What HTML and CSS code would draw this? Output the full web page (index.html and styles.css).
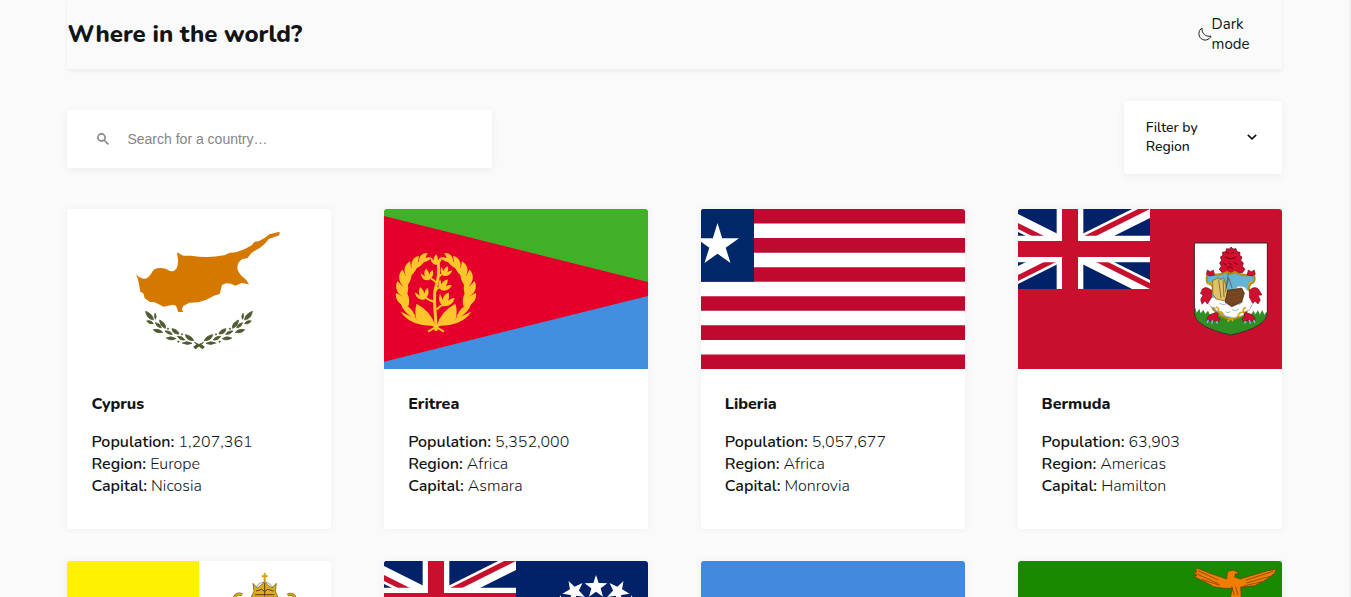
FILE: index.html
```html
<!DOCTYPE html>
<html lang="en">
<head>
<meta charset="utf-8">
<meta name="viewport" content="width=device-width, initial-scale=1">
<title>Where in the world?</title>
<link rel="stylesheet" href="styles.css">
</head>
<body>
<svg class="defs" aria-hidden="true">
  <defs>
    <clipPath id="uj-frame"><path d="M0 0h60v30H0z"/></clipPath>
    <clipPath id="uj-quarters"><path d="M30 15h30v15zv15H0zH0V0zV0h30z"/></clipPath>
    <g id="union-jack" clip-path="url(#uj-frame)">
      <path fill="#012169" d="M0 0h60v30H0z"/>
      <path d="M0 0l60 30m0-30L0 30" stroke="#fff" stroke-width="6"/>
      <path d="M0 0l60 30m0-30L0 30" stroke="#c8102e" stroke-width="4" clip-path="url(#uj-quarters)"/>
      <path d="M30 0v30M0 15h60" stroke="#fff" stroke-width="10"/>
      <path d="M30 0v30M0 15h60" stroke="#c8102e" stroke-width="6"/>
    </g>
    <path id="star" d="M0-35L8-11 34-10 14 5 21 30 0 15-21 30-14 5-34-10-8-11z"/>
    <g id="olive" fill="#4e5b31" stroke="#4e5b31" stroke-width="2.500" stroke-linejoin="round">
      <path d="M239 319q2 21 23 26 0-17-23-26zM267 325q-4 10 1 18 6-8-1-18zM242 348q8 12 20 8-6-12-20-8zM281 345q0 18 17 25 4-14-17-25zM268 353q4 14 18 16-2-13-18-16zM262 374q8 12 28 8-10-12-28-8zM318 371q2 17 21 16-3-14-21-16zM297 378q9 12 22 10-6-12-22-10zM301 399q14 10 28 2-13-10-28-2zM358 389q3 18 25 18-5-15-25-18zM334 394q8 14 22 11-6-12-22-11zM349 414q15 8 29 1-14-9-29-1z"/>
      <circle cx="306" cy="371" r="2"/><circle cx="348" cy="388" r="2"/><circle cx="337" cy="410" r="2"/>
      <path d="M385 412l28 13-4 6-12-9-9 9-5-5 9-8z"/>
    </g>
    <path id="leaf" d="M2 14C-22 2-28-20-17-38L-2-20Q0-36 10-44C16-22 16-4 2 14z"/>
    <g id="laurel" fill="#ffc62b">
      <path d="M154 362Q78 364 50 320Q75 330 94 342Q60 326 49 294Q82 304 92 330L98 347Q90 320 98 296Q142 320 154 362z"/>
      <g transform="translate(156 256)">
        <use href="#leaf" transform="rotate(-22) translate(-97 0)"/>
        <use href="#leaf" transform="rotate(-5) translate(-96 0)"/>
        <use href="#leaf" transform="rotate(13) translate(-95 0)"/>
        <use href="#leaf" transform="rotate(31) translate(-96 0) scale(.92)"/>
        <use href="#leaf" transform="rotate(48) translate(-97 0) scale(.82)"/>
        <use href="#leaf" transform="rotate(64) translate(-100 0) scale(.7)"/>
      </g>
    </g>
    <path id="sprig" d="M0 0Q-22-4-20-30Q-12-22-9-16Q-10-32 2-40Q8-28 7-18Q12-28 22-30Q22-6 0 0z"/>
    <g id="paw"><path fill="#d0102e" stroke="#501" stroke-width="1.5" d="M607 320l-3 14 8 8-5 9-10-6-8 10-7-9-9 4 1-13 12-10z"/><path d="M577 345l-4 9m17-8l-3 10m15-8l2 8" stroke="#7fb6dc" stroke-width="5"/></g>
  </defs>
</svg>

<div class="page">
  <header class="header">
    <h1 class="title">Where in the world?</h1>
    <button class="mode" type="button">
      <svg class="moon" viewBox="0 0 16 16" aria-hidden="true"><path d="M4.600 1.200C4.200 7.500 8.500 11.500 14.900 10.500C12.800 14.900 7.500 16.300 3.700 13.400C-.2 10.300.3 3.600 4.600 1.200z"/></svg>
      <span>Dark mode</span>
    </button>
  </header>

  <div class="toolbar">
    <label class="search">
      <svg class="glass" viewBox="0 0 12 12" aria-hidden="true"><circle cx="4.500" cy="4.500" r="3.600"/><path d="M7.200 7.200L11.400 11.400"/></svg>
      <input class="search-input" type="text" placeholder="Search for a country…" aria-label="Search for a country">
    </label>
    <button class="filter" type="button" aria-haspopup="listbox">
      <span class="filter-text">Filter by Region</span>
      <svg class="chevron" viewBox="0 0 10 6" aria-hidden="true"><path d="M.8.8L5 4.800 9.200.8"/></svg>
    </button>
  </div>

  <main class="grid">
    <article class="card">
      <svg class="flag" viewBox="3 12 792 480" role="img" aria-label="Flag of Cyprus">
        <path fill="#fff" d="M3 12h792v480H3z"/>
        <path fill="#d57800" d="M641 80L610 88 597 98 578 109 566 110 557 121 535 133 510 142 492 143 474 151 Q425 161 375 152L352 152 333 142 336 165 Q336 185 331 191 Q322 202 312 198 Q298 188 282 189 Q266 190 261 197 Q254 209 245 218 Q228 227 210 208L216 223 220 243 223 260 232 265 236 280 252 291 266 292 293 305 321 299 330 302 337 321 352 321 347 312 353 302 370 293 397 292 421 284 444 272 461 267 468 240 480 235 495 236 508 242 527 234 549 238 541 225 528 214 Q514 198 514 188 Q514 171 529 162L544 160 557 143 582 128 598 115 608 102 640 91z"/>
        <use href="#olive"/><use href="#olive" transform="translate(798 0) scale(-1 1)"/>
      </svg>
      <div class="info">
        <h2 class="name">Cyprus</h2>
        <p class="row"><b>Population:</b> 1,207,361</p>
        <p class="row"><b>Region:</b> Europe</p>
        <p class="row"><b>Capital:</b> Nicosia</p>
      </div>
    </article>

    <article class="card">
      <svg class="flag" viewBox="0 12 792 480" role="img" aria-label="Flag of Eritrea">
        <path fill="#43b02a" d="M0 12h792v240H0z"/>
        <path fill="#418fde" d="M0 252h792v240H0z"/>
        <path fill="#e4002b" d="M0 33L792 231v42L0 470z"/>
        <use href="#laurel"/><use href="#laurel" transform="translate(312 0) scale(-1 1)"/>
        <g fill="none" stroke="#ffc62b" stroke-width="6">
          <path stroke-width="9" d="M156 378C156 320 145 270 156 245C164 220 166 200 163 174"/>
          <path d="M158 314Q170 300 180 300M150 290Q132 285 126 278M154 258Q165 244 172 248M158 234Q150 224 140 220M165 215Q170 206 182 206M132 380L180 352M180 380L132 352"/>
        </g>
        <g fill="#ffc62b">
          <use href="#sprig" transform="translate(156 180) scale(.8)"/><use href="#sprig" transform="translate(134 226) rotate(-15) scale(.9)"/><use href="#sprig" transform="translate(180 213) rotate(20) scale(.8)"/><use href="#sprig" transform="translate(172 256) rotate(28) scale(.95)"/><use href="#sprig" transform="translate(121 284) rotate(-20)"/><use href="#sprig" transform="translate(180 304) rotate(16) scale(1.1)"/>
        </g>
      </svg>
      <div class="info">
        <h2 class="name">Eritrea</h2>
        <p class="row"><b>Population:</b> 5,352,000</p>
        <p class="row"><b>Region:</b> Africa</p>
        <p class="row"><b>Capital:</b> Asmara</p>
      </div>
    </article>

    <article class="card">
      <svg class="flag" viewBox="0 0 264 160" role="img" aria-label="Flag of Liberia">
        <path fill="#fff" d="M0 0h264v160H0z"/>
        <path stroke="#bf0a30" stroke-width="14.545" d="M0 7.270h264M0 36.360h264M0 65.450h264M0 94.540h264M0 123.630h264M0 152.720h264"/>
        <path fill="#002868" d="M0 0h53v72.700H0z"/>
        <path fill="#fff" d="M16.500 14L21.200 29.300H38L24.700 38.700 29.500 54 16.500 44.700 3.500 54 8.300 38.700-5 29.300H11.800z"/>
      </svg>
      <div class="info">
        <h2 class="name">Liberia</h2>
        <p class="row"><b>Population:</b> 5,057,677</p>
        <p class="row"><b>Region:</b> Africa</p>
        <p class="row"><b>Capital:</b> Monrovia</p>
      </div>
    </article>

    <article class="card">
      <svg class="flag" viewBox="6 12 792 480" role="img" aria-label="Flag of Bermuda">
        <path fill="#c8102e" d="M6 12h792v480H6z"/>
        <use href="#union-jack" transform="translate(-78 12) scale(8)"/>
        <clipPath id="shield"><path d="M535 114H754V322Q754 366 644 390Q535 366 535 322z"/></clipPath>
        <g clip-path="url(#shield)">
          <path fill="#fff" d="M530 110h230v290H530z"/>
          <path fill="#2f8f22" d="M530 318l8-10 4 15 8-12 4 14 8-11 6 13 8-10 5 11H706l6-11 6 11 8-12 5 13 8-14 6 14 9-11v90H530z"/>
        </g>
        <path fill="#d0102e" stroke="#501" stroke-width="2" d="M618 203l-8-10 6-9-5-10 6-8-4-10 8-5-2-9 10-2 3-9 9 1 4-6 6 6 9-1 3 9 9 2-1 9 7 5-4 10 8 8-3 10 8 9-8 10z"/>
        <path d="M630 142l8 3m8 0l8-3M628 156q16 10 32 0M622 174l9 7m8-8l8 8m7-8l10 5M634 190l8-5 9 6" fill="none" stroke="#601" stroke-width="3"/>
        <path fill="#64b4d4" stroke="#b58a10" stroke-width="6" d="M576 207Q610 214 632 201L644 207 657 201Q680 216 712 207Q720 222 712 232Q694 240 700 258Q718 282 703 304L690 322Q668 342 646 342Q614 338 592 314Q574 286 590 252Q594 240 575 235Q568 220 576 207z"/>
        <path fill="#fff" stroke="#9aa5cc" stroke-width="2" d="M576 287q10-15 24-7 17-12 28-3l16-18 25-16q21 1 23 11 16 6 16 24 10 15-3 25 1 12-16 16-4 17-22 14-15 10-27 2-17 0-21-14-22 0-22-13-20-1-21-21z"/>
        <path fill="#dfc367" stroke="#765914" stroke-width="2" d="M590 227l16-8 9 5 8-6 16 56-15 13-24-5-10-15z"/>
        <path d="M608 224l7 55m6-55l3 52M637 204l-9 58m10-44l10 31m-10-29l-8 28" fill="none" stroke="#5a4630" stroke-width="2"/>
        <path fill="#74431f" stroke="#3c210d" stroke-width="2" d="M635 256l42-7 8 16-8 27-30 13-20-14z"/>
        <path d="M636 264l43-4m-41 18l38-8m-33 21l31-10" stroke="#8a5228" stroke-width="2"/>
        <path d="M610 294q10 10 22 2m16 18q12 8 21-2m-41 8q8 6 15 0m38-29q-10 1-11 10" fill="none" stroke="#7d8cbc" stroke-width="2"/>
        <g fill="#d0102e" stroke="#501" stroke-width="1.500">
          <path d="M586 256q-14-14-27-4l-6 14 8 3-7 15 4 14 9-10 7 9 12-18zM700 256q14-14 27-4l11 18-12 1 7 14-7 12-9-8-7 6-10-18z"/>
          <path d="M596 210l-4-15-9 5-9-5-3 13 10 5zM693 210l4-15 9 5 9-5 3 13-10 5z"/>
        </g>
        <use href="#paw"/><use href="#paw" transform="translate(1290 0) scale(-1 1)"/>
        <path fill="none" stroke="#d6a916" stroke-width="5" d="M575 235q12-6 12 5m121-8q-10-2-9 8M600 306q12 4 6 14 14 0 18 13m10 16q8-2 5-11m51-30q-12 2-7 13-15 0-18 14m-13 13q-6-2-3-11"/>
        <path fill="none" stroke="#332b2b" stroke-width="3" d="M535 114H754V322Q754 366 644 390Q535 366 535 322z"/>
      </svg>
      <div class="info">
        <h2 class="name">Bermuda</h2>
        <p class="row"><b>Population:</b> 63,903</p>
        <p class="row"><b>Region:</b> Americas</p>
        <p class="row"><b>Capital:</b> Hamilton</p>
      </div>
    </article>

    <article class="card">
      <svg class="flag" viewBox="21 18 792 480" role="img" aria-label="Flag of Vatican City">
        <path fill="#fff" d="M21 18h792v480H21z"/><path fill="#fff200" d="M21 18h396v480H21z"/>
        <circle cx="613" cy="107" r="26" fill="#fff" stroke="#bbb" stroke-width="4"/>
        <path d="M614 54v24M605 64h18" stroke="#d5a10e" stroke-width="6"/>
        <path fill="#dcae1c" stroke="#68470b" stroke-width="2" d="M579 85l13 14 13-10 9-10 8 10 14 10 13-14-3 24 8 18h-81l9-18z"/>
        <path d="M588 108l17-5 9 7 9-7 18 5M585 119h58M614 84v40" fill="none" stroke="#5e430c" stroke-width="3"/>
        <path d="M523 127q10-16 23-7M683 120q15-7 22 7" fill="none" stroke="#6f5514" stroke-width="9"/>
        <path d="M523 127q10-16 23-7M683 120q15-7 22 7" fill="none" stroke="#dcae1c" stroke-width="5"/>
      </svg>
    </article>
    <article class="card">
      <svg class="flag" viewBox="12 18 792 480" role="img" aria-label="Flag of the Cook Islands">
        <path fill="#012169" d="M12 18h792v480H12z"/>
        <use href="#union-jack" transform="translate(-72 18) scale(8)"/>
        <g fill="#fff"><use href="#star" x="648" y="95"/><use href="#star" transform="translate(582 109) rotate(-28)"/><use href="#star" transform="translate(714 109) rotate(28)"/><use href="#star" transform="translate(529 153) rotate(-50)"/><use href="#star" transform="translate(767 153) rotate(50)"/></g>
      </svg>
    </article>
    <article class="card">
      <svg class="flag" viewBox="0 0 264 160" role="img" aria-label="Flag of Somalia"><path fill="#4189dd" d="M0 0h264v160H0z"/></svg>
    </article>
    <article class="card">
      <svg class="flag" viewBox="24 18 792 480" role="img" aria-label="Flag of Zambia">
        <path fill="#198a00" d="M24 18h792v480H24z"/>
        <path fill="#ef7d00" stroke="#5b3b00" stroke-width="2" d="M650 72L652 52Q665 41 682 50L685 58 676 56 674 66 690 72 730 60 770 48 800 42 794 54 780 66 758 80 735 92 710 95 692 96 694 130H660L668 100 642 100 610 95 588 82 570 74 552 64 560 62 549 52 560 51 556 43 563 40 600 55z"/>
        <path d="M563 47l62 28M556 55l69 31M575 73l55 18M789 49l-82 27m73-12l-70 20m46-4l-55 13M665 93l8 27m4-25l7 25" fill="none" stroke="#6b3a00" stroke-width="2"/>
      </svg>
    </article>
  </main>
</div>
</body>
</html>
```
FILE: styles.css
```css
* { box-sizing: border-box; }

html, body { height: 100%; }

body {
  margin: 0;
  overflow: hidden;
  background: #fafafa;
  border-right: 2px solid #f1f1f1;
  color: #111517;
  font-family: Nunito, Lato, "Open Sans", sans-serif;
  font-size: 16px;
}

.defs { position: absolute; width: 0; height: 0; }

.page { width: 90%; margin: 0 auto; }

button {
  border: 0;
  background: none;
  color: inherit;
  font: inherit;
  text-align: left;
  cursor: pointer;
}

.header {
  display: flex;
  align-items: center;
  justify-content: space-between;
  height: 69px;
  padding-right: 23px;
  padding-bottom: 1px;
  box-shadow: 0 2px 4px rgba(0, 0, 0, 0.06);
}

.title { margin: 0; font-size: 24px; font-weight: 800; line-height: 32px; }

.mode {
  display: flex;
  align-items: center;
  width: 61px;
  padding: 0;
  font-size: 15px;
  line-height: 20px;
}

.moon { flex: none; width: 14px; height: 14px; fill: none; stroke: #111517; stroke-width: 1.1; }

.toolbar {
  display: flex;
  align-items: center;
  justify-content: space-between;
  margin: 32px 0 35px;
}

.search {
  display: flex;
  align-items: center;
  gap: 18px;
  width: 35%;
  height: 58px;
  margin-top: 2px;
  padding: 0 30px;
  border-radius: 3px;
  background: #fff;
  box-shadow: 0 2px 9px rgba(0, 0, 0, 0.054);
}

.glass { flex: none; width: 12px; height: 12px; fill: none; stroke: #858585; stroke-width: 1.6; }

.search-input {
  flex: 1;
  min-width: 0;
  padding: 0;
  border: 0;
  outline: 0;
  background: none;
  font-family: "Liberation Sans", Arial, sans-serif;
  font-size: 14px;
}

.search-input::placeholder { color: #858585; }

.filter {
  display: flex;
  align-items: center;
  justify-content: space-between;
  width: 13%;
  padding: 17px 25px 18px 22px;
  border-radius: 3px;
  background: #fff;
  box-shadow: 0 2px 9px rgba(0, 0, 0, 0.054);
  font-size: 14px;
  font-weight: 500;
  line-height: 19px;
}

.filter-text { width: 64px; }

.chevron { width: 10px; height: 6px; fill: none; stroke: #111517; stroke-width: 1.6; }

.grid {
  display: grid;
  grid-template-columns: repeat(auto-fill, 264px);
  gap: 32px;
  justify-content: space-between;
}

.card {
  overflow: hidden;
  min-height: 320px;
  border-radius: 3px;
  background: #fff;
  box-shadow: 0 0 7px 2px rgba(0, 0, 0, 0.03);
}

.flag { display: block; width: 100%; height: 160px; }

.info { padding: 24px; }

.name { margin: 0 0 16px; font-size: 16px; font-weight: 800; line-height: 22px; }

.row { margin: 0; font-weight: 300; line-height: 22px; }

.row b { font-weight: 600; }
```
